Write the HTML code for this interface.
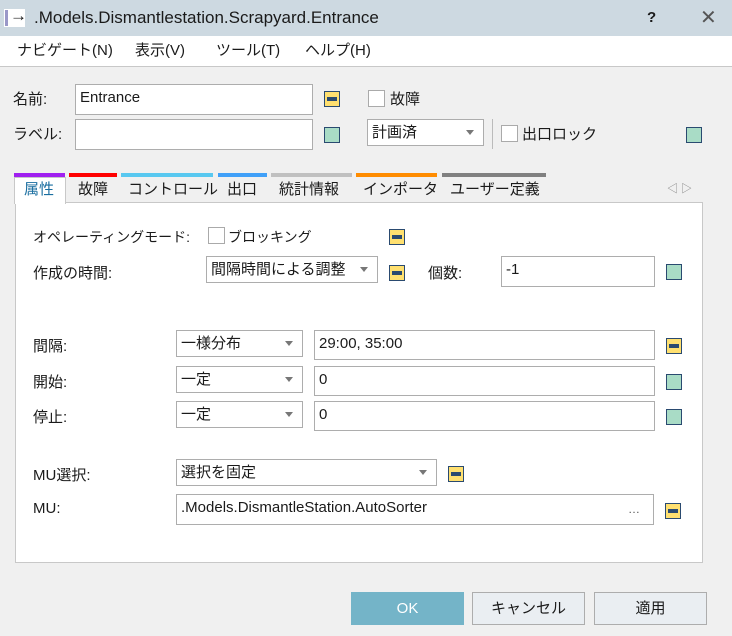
<!DOCTYPE html>
<html><head><meta charset="utf-8"><style>
*{box-sizing:border-box;margin:0;padding:0}
body{width:732px;height:636px;background:#f0f0f0;position:relative;overflow:hidden;font-family:"Liberation Sans","Noto Sans CJK JP",sans-serif;font-size:14px;color:#1a1a1a}
.a{position:absolute;white-space:nowrap}
.tb{position:absolute;background:#fff;border:1px solid #adadad;padding:2px 4px;font-size:15px;line-height:22px}
.dd{position:absolute;background:#fff;border:1px solid #adadad;padding:1px 4px 0;font-size:15px;line-height:23px}
.dd:after{content:"";position:absolute;right:9px;top:10px;border-left:4px solid transparent;border-right:4px solid transparent;border-top:5px solid #777}
.y{position:absolute;width:16px;height:16px;background:#ffe070;border:1px solid #2a4a70}
.y:after{content:"";position:absolute;left:2px;right:2px;top:5px;height:4px;background:#2a4a70}
.g{position:absolute;width:16px;height:16px;background:#a9dcc6;border:1px solid #2a4a70}
.cb{position:absolute;width:17px;height:17px;background:#fff;border:1px solid #aaa}
.tab{position:absolute;top:178px;font-size:15px;line-height:24px}
.bar{position:absolute;top:173px;height:4px}
.btn{position:absolute;top:592px;height:33px;border:1px solid #adadad;background:#eaeef2;text-align:center;line-height:31px;font-size:15px}
</style></head><body>
<div class="a" style="left:0;top:0;width:732px;height:36px;background:#cdd9e1"></div>
<div class="a" style="left:4px;top:9px;width:21px;height:18px;background:#fff"></div>
<div class="a" style="left:5px;top:10px;width:3px;height:16px;background:#9a98c8"></div>
<div class="a" style="left:10px;top:6px;font-size:17px;font-weight:bold">→</div>
<div class="a" style="left:34px;top:7px;font-size:17px;line-height:22px">.Models.Dismantlestation.Scrapyard.Entrance</div>
<div class="a" style="left:647px;top:9px;font-size:15px;font-weight:bold">?</div>
<div class="a" style="left:700px;top:5px;font-size:20px;color:#555">✕</div>
<div class="a" style="left:0;top:36px;width:732px;height:31px;background:#fff;border-bottom:1px solid #c8c8c8"></div>
<div class="a" style="left:17px;top:40px;font-size:15px;line-height:22px">ナビゲート(N)</div>
<div class="a" style="left:135px;top:40px;font-size:15px;line-height:22px">表示(V)</div>
<div class="a" style="left:216px;top:40px;font-size:15px;line-height:22px">ツール(T)</div>
<div class="a" style="left:305px;top:40px;font-size:15px;line-height:22px">ヘルプ(H)</div>

<div class="a" style="left:13px;top:88px;font-size:15px">名前:</div>
<div class="tb" style="left:75px;top:84px;width:238px;height:31px">Entrance</div>
<div class="y" style="left:324px;top:91px"></div>
<div class="cb" style="left:368px;top:90px"></div>
<div class="a" style="left:390px;top:88px;font-size:15px">故障</div>
<div class="a" style="left:13px;top:123px;font-size:15px">ラベル:</div>
<div class="tb" style="left:75px;top:119px;width:238px;height:31px"></div>
<div class="g" style="left:324px;top:127px"></div>
<div class="dd" style="left:367px;top:119px;width:117px;height:27px">計画済</div>
<div class="a" style="left:492px;top:119px;width:1px;height:30px;background:#bbb"></div>
<div class="cb" style="left:501px;top:125px"></div>
<div class="a" style="left:522px;top:123px;font-size:15px">出口ロック</div>
<div class="g" style="left:686px;top:127px"></div>

<div class="bar" style="left:14px;width:51px;background:#a020f0"></div>
<div class="bar" style="left:69px;width:48px;background:#f00"></div>
<div class="bar" style="left:121px;width:92px;background:#58c8f0"></div>
<div class="bar" style="left:218px;width:49px;background:#40a0f8"></div>
<div class="bar" style="left:271px;width:81px;background:#c0c0c0"></div>
<div class="bar" style="left:356px;width:81px;background:#ff8c00"></div>
<div class="bar" style="left:442px;width:104px;background:#808080"></div>
<div class="a" style="left:15px;top:202px;width:688px;height:361px;background:#fff;border:1px solid #c8c8c8"></div>
<div class="a" style="left:14px;top:177px;width:52px;height:27px;background:#fff;border:1px solid #c8c8c8;border-bottom:none"></div>
<div class="tab" style="left:24px;color:#1a6ea0">属性</div>
<div class="tab" style="left:78px">故障</div>
<div class="tab" style="left:128px">コントロール</div>
<div class="tab" style="left:227px">出口</div>
<div class="tab" style="left:279px">統計情報</div>
<div class="tab" style="left:363px">インポータ</div>
<div class="tab" style="left:450px">ユーザー定義</div>
<div class="a" style="left:667px;top:180px;font-size:11px;color:#888">◁ ▷</div>

<div class="a" style="left:33px;top:227px;font-size:14px">オペレーティングモード:</div>
<div class="cb" style="left:208px;top:227px"></div>
<div class="a" style="left:228px;top:227px;font-size:14px">ブロッキング</div>
<div class="y" style="left:389px;top:229px"></div>
<div class="a" style="left:33px;top:262px;font-size:15px">作成の時間:</div>
<div class="dd" style="left:206px;top:256px;width:172px;height:27px">間隔時間による調整</div>
<div class="y" style="left:389px;top:265px"></div>
<div class="a" style="left:428px;top:262px;font-size:15px">個数:</div>
<div class="tb" style="left:501px;top:256px;width:154px;height:31px">-1</div>
<div class="g" style="left:666px;top:264px"></div>

<div class="a" style="left:33px;top:335px;font-size:15px">間隔:</div>
<div class="dd" style="left:176px;top:330px;width:127px;height:27px">一様分布</div>
<div class="tb" style="left:314px;top:330px;width:341px;height:30px">29:00, 35:00</div>
<div class="y" style="left:666px;top:338px"></div>
<div class="a" style="left:33px;top:371px;font-size:15px">開始:</div>
<div class="dd" style="left:176px;top:366px;width:127px;height:27px">一定</div>
<div class="tb" style="left:314px;top:366px;width:341px;height:30px">0</div>
<div class="g" style="left:666px;top:374px"></div>
<div class="a" style="left:33px;top:406px;font-size:15px">停止:</div>
<div class="dd" style="left:176px;top:401px;width:127px;height:27px">一定</div>
<div class="tb" style="left:314px;top:401px;width:341px;height:30px">0</div>
<div class="g" style="left:666px;top:409px"></div>

<div class="a" style="left:33px;top:464px;font-size:15px">MU選択:</div>
<div class="dd" style="left:176px;top:459px;width:261px;height:27px">選択を固定</div>
<div class="y" style="left:448px;top:466px"></div>
<div class="a" style="left:33px;top:500px;font-size:15px">MU:</div>
<div class="tb" style="left:176px;top:494px;width:478px;height:31px">.Models.DismantleStation.AutoSorter</div>
<div class="a" style="left:628px;top:502px;font-size:12px;color:#555">…</div>
<div class="y" style="left:665px;top:503px"></div>

<div class="btn" style="left:351px;width:113px;background:#74b4c8;border-color:#74b4c8;color:#fff">OK</div>
<div class="btn" style="left:472px;width:113px">キャンセル</div>
<div class="btn" style="left:594px;width:113px">適用</div>
</body></html>
